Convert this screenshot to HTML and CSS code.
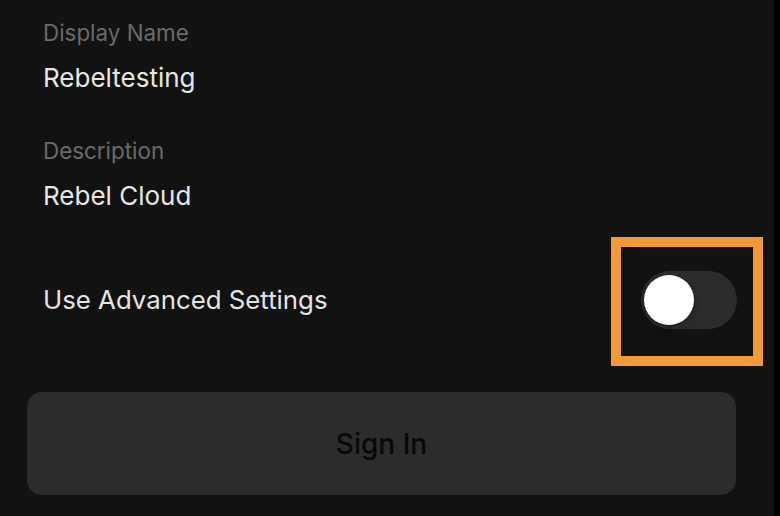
FILE: index.html
```html
<!DOCTYPE html>
<html lang="en">
<head>
<meta charset="utf-8">
<title>Account</title>
<link rel="stylesheet" href="styles.css">
</head>
<body>
<div class="page">
  <main class="screen">
    <section class="field first">
      <div class="label">Display Name</div>
      <div class="value">Rebeltesting</div>
    </section>
    <div class="sep"></div>
    <section class="field">
      <div class="label">Description</div>
      <div class="value">Rebel Cloud</div>
    </section>
    <div class="sep"></div>
    <section class="toggle-row">
      <span class="toggle-label">Use Advanced Settings</span>
      <span class="switch"><span class="knob"></span></span>
    </section>
    <button class="signin" type="button">Sign In</button>
    <div class="highlight"></div>
  </main>
  <div class="edge"></div>
</div>
</body>
</html>
```
FILE: styles.css
```css
* { box-sizing: border-box; }
html, body {
  margin: 0;
  padding: 0;
  background: #121212;
  font-family: Inter, "Noto Sans", "Liberation Sans", sans-serif;
}
.page {
  display: flex;
  width: 780px;
  height: 516px;
  overflow: hidden;
}
.screen {
  position: relative;
  flex: 1;
  background: #121212;
  display: flex;
  flex-direction: column;
}
.edge {
  width: 6px;
  background: #000;
}
.field {
  padding: 25px 0 19px 43px;
  display: flex;
  flex-direction: column;
  gap: 18px;
}
.field.first { padding-top: 21px; padding-bottom: 20px; }
.label {
  font-size: 22.4px;
  line-height: 24px;
  color: #6a6a6a;
}
.value {
  font-size: 26px;
  line-height: 30px;
  color: #e6e6e6;
}
.sep {
  height: 1px;
  margin-left: 28px;
  background: #171717;
}
.toggle-row {
  display: flex;
  align-items: center;
  justify-content: space-between;
  padding: 40px 37px 63px 43px;
}
.toggle-label {
  font-size: 25.8px;
  line-height: 30px;
  color: #e4e4e4;
}
.switch {
  position: relative;
  display: block;
  width: 96px;
  height: 58px;
  border-radius: 29px;
  background: #2c2c2e;
}
.knob {
  position: absolute;
  left: 3px;
  top: 4px;
  width: 50px;
  height: 50px;
  border-radius: 50%;
  background: #fff;
  box-shadow: 0 3px 8px rgba(0,0,0,0.25), 0 1px 2px rgba(0,0,0,0.2);
}
.signin {
  margin: 0 38px 0 27px;
  height: 103px;
  border: none;
  border-radius: 15px;
  background: #2c2c2c;
  color: #080808;
  font-family: inherit;
  font-size: 28px;
  font-weight: 500;
  padding: 0;
}
.highlight {
  position: absolute;
  left: 611px;
  top: 237px;
  width: 152px;
  height: 129px;
  border: 10px solid #f09a3a;
}
```
